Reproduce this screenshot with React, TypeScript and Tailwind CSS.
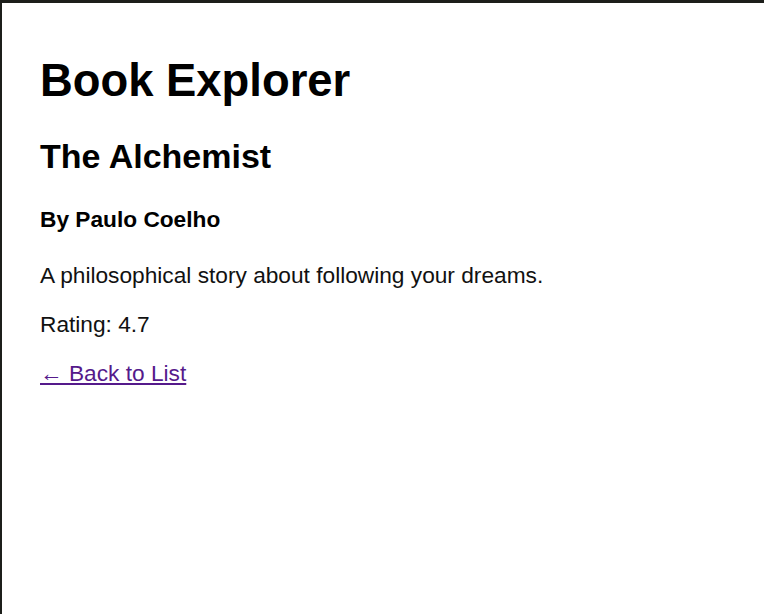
export default function App() {
  return (
    <div className="min-h-[614px] bg-white border-t-[3px] border-l-2 border-[#1c1e1a] font-['Liberation_Sans',Arial,sans-serif] text-black">
      <div className="pl-[38px] pt-[22px]">
        <h1 className="text-[45.4px] leading-[1.149] font-bold mt-[30px] mb-[30px]">Book Explorer</h1>
        <h2 className="text-[34px] leading-[1.149] font-bold mb-[30px]">The Alchemist</h2>
        <h4 className="text-[22.7px] leading-[1.149] font-bold mb-[30px]">By Paulo Coelho</h4>
        <p className="text-[22.7px] leading-[1.149] text-[#111] mb-[23px]">A philosophical story about following your dreams.</p>
        <p className="text-[22.7px] leading-[1.149] text-[#111] mb-[23px]">Rating: 4.7</p>
        <a href="#" className="text-[22.7px] leading-[1.149] text-[#551a8b] underline">
          ← Back to List
        </a>
      </div>
    </div>
  );
}
